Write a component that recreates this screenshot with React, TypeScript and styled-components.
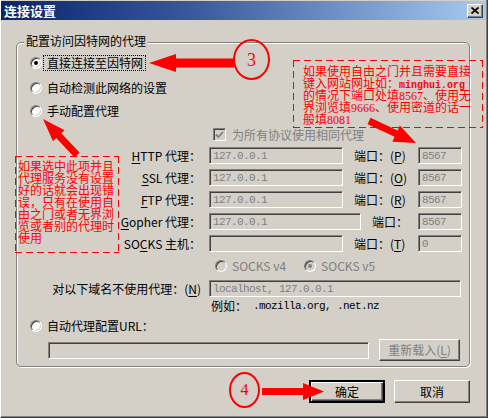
import React from "react";
import styled, { createGlobalStyle, css } from "styled-components";

const UI_FONT = `"Noto Sans CJK SC", "Liberation Sans", sans-serif`;
const MONO = `"Liberation Mono", "Noto Sans CJK SC", monospace`;
const NOTE_FONT = `"Liberation Serif", "Noto Sans CJK SC", serif`;

const Global = createGlobalStyle`
  html, body { margin: 0; padding: 0; background: #d4d0c8; }
  body { font-family: ${UI_FONT}; font-size: 12px; color: #000; }
  * { box-sizing: border-box; }
`;

const Window = styled.div`
  position: relative;
  width: 488px;
  height: 418px;
  padding-top: 1px;
  background: #d4d0c8;
  border-left: 1px solid #ffffff;
  border-right: 1px solid #404040;
  border-bottom: 1px solid #404040;
  box-shadow: inset -1px -1px 0 #808080;
  display: flex;
  flex-direction: column;
  overflow: hidden;
`;

const TitleBar = styled.div`
  height: 19px;
  margin-right: 1px;
  padding: 0 3px 0 3px;
  display: flex;
  align-items: center;
  justify-content: space-between;
  background: linear-gradient(90deg, #0a246a 0%, #3a5a9c 40%, #a6caf0 100%);
`;

const TitleText = styled.span`
  color: #fff;
  font-weight: bold;
  font-size: 13px;
  line-height: 15px;
  letter-spacing: 0;
`;

const CloseButton = styled.span`
  width: 16px;
  height: 14px;
  background: #d4d0c8;
  border: 1px solid;
  border-color: #ffffff #404040 #404040 #ffffff;
  box-shadow: inset -1px -1px 0 #808080;
  display: flex;
  align-items: center;
  justify-content: center;
`;

const Body = styled.div`
  flex: 1;
  display: flex;
  flex-direction: column;
  padding: 0 17px 0 15px;
`;

const GroupBox = styled.div`
  margin-top: 22px;
  height: 325px;
  border: 1px solid #808080;
  border-radius: 5px;
  box-shadow: 1px 1px 0 #ffffff, inset 1px 1px 0 #ffffff;
  display: flex;
  flex-direction: column;
  padding: 0 7px 0 0;
`;

const Legend = styled.div`
  align-self: flex-start;
  margin: -9px 0 0 7px;
  padding: 0 2px;
  background: #d4d0c8;
  line-height: 14px;
  white-space: nowrap;
`;

const Row = styled.div<{ $mt: number; $h: number; $pl?: number }>`
  display: flex;
  align-items: center;
  flex: none;
  margin-top: ${(p) => p.$mt}px;
  height: ${(p) => p.$h}px;
  padding-left: ${(p) => p.$pl ?? 0}px;
  white-space: nowrap;
`;

const Radio = styled.span<{ $checked?: boolean; $disabled?: boolean; $ml?: number }>`
  position: relative;
  flex: none;
  width: 12px;
  height: 12px;
  margin-left: ${(p) => p.$ml ?? 0}px;
  border-radius: 50%;
  background: ${(p) => (p.$disabled ? "#d4d0c8" : "#ffffff")};
  border: 1px solid;
  border-color: #808080 #ffffff #ffffff #808080;
  box-shadow: inset 1px 1px 0 #404040, inset -1px -1px 0 #d4d0c8;
  ${(p) =>
    p.$checked &&
    css`
      &::after {
        content: "";
        position: absolute;
        left: 3px;
        top: 3px;
        width: 4px;
        height: 4px;
        border-radius: 50%;
        background: ${p.$disabled ? "#808080" : "#000000"};
      }
    `}
`;

const RadioLabel = styled.span<{ $focus?: boolean; $disabled?: boolean }>`
  line-height: 14px;
  color: ${(p) => (p.$disabled ? "#808080" : "#000")};
  ${(p) =>
    p.$focus
      ? css`
          margin-left: 2px;
          padding: 0 2px 0 3px;
          outline: 1px dotted #000;
          outline-offset: 0;
        `
      : css`
          margin-left: 5px;
        `}
`;

const Checkbox = styled.span<{ $ml: number }>`
  flex: none;
  width: 13px;
  height: 13px;
  margin-left: ${(p) => p.$ml}px;
  background: #d4d0c8;
  border: 1px solid;
  border-color: #808080 #ffffff #ffffff #808080;
  box-shadow: inset 1px 1px 0 #404040, inset -1px -1px 0 #d4d0c8;
  display: flex;
  align-items: center;
  justify-content: center;
`;

const DimText = styled.span<{ $ml?: number }>`
  margin-left: ${(p) => p.$ml ?? 0}px;
  color: #808080;
  line-height: 14px;
`;

const FieldLabel = styled.span`
  flex: none;
  width: 192px;
  padding-right: 8px;
  text-align: right;
  line-height: 14px;
`;

const Accel = styled.u`
  text-decoration: underline;
  text-underline-offset: 2px;
`;

const Field = styled.div<{ $w: number; $h?: number; $ml?: number; $auto?: boolean }>`
  flex: none;
  width: ${(p) => p.$w}px;
  height: ${(p) => p.$h ?? 17}px;
  margin-left: ${(p) => (p.$auto ? "auto" : `${p.$ml ?? 0}px`)};
  padding-left: 3px;
  background: #d4d0c8;
  border: 1px solid;
  border-color: #808080 #ffffff #ffffff #808080;
  box-shadow: inset 1px 1px 0 #404040, inset -1px -1px 0 #d4d0c8;
  color: #808080;
  font-family: ${MONO};
  font-size: 11px;
  letter-spacing: -0.6px;
  display: flex;
  align-items: center;
  overflow: hidden;
`;

const PortLabel = styled.span`
  margin-left: 11px;
  line-height: 14px;
`;

const ExampleText = styled.span`
  margin-left: 194px;
  line-height: 14px;
`;

const ExampleDomains = styled.span`
  margin-left: 6px;
  font-family: ${MONO};
  font-size: 11px;
  letter-spacing: -0.6px;
`;

const Button = styled.button<{ $default?: boolean; $disabled?: boolean; $w: number; $h: number; $ml?: number }>`
  flex: none;
  width: ${(p) => p.$w}px;
  height: ${(p) => p.$h}px;
  margin: 0 0 0 ${(p) => p.$ml ?? 0}px;
  padding: 0;
  background: #d4d0c8;
  font-family: ${UI_FONT};
  font-size: 12px;
  line-height: 14px;
  color: ${(p) => (p.$disabled ? "#808080" : "#000")};
  border: 1px solid;
  border-color: #ffffff #404040 #404040 #ffffff;
  box-shadow: inset -1px -1px 0 #808080, inset 1px 1px 0 #d4d0c8;
  ${(p) =>
    p.$default &&
    css`
      outline: 1px solid #000;
      outline-offset: -1px;
      border: 2px solid;
      border-color: #000 #000 #000 #000;
      box-shadow: inset 1px 1px 0 #ffffff, inset -1px -1px 0 #404040, inset -2px -2px 0 #808080;
    `}
`;

const ButtonBar = styled.div`
  display: flex;
  justify-content: flex-end;
  margin-top: 13px;
  gap: 9px;
`;

/* ---------- annotations (overlays) ---------- */

const Note = styled.div<{ $x: number; $y: number; $w: number; $h: number; $pt: number; $pl: number }>`
  position: absolute;
  left: ${(p) => p.$x}px;
  top: ${(p) => p.$y}px;
  width: ${(p) => p.$w}px;
  height: ${(p) => p.$h}px;
  padding: ${(p) => p.$pt}px 0 0 ${(p) => p.$pl}px;
  color: #ff0000;
  font-family: ${NOTE_FONT};
  font-size: 12px;
  line-height: 12px;
  white-space: nowrap;
  background:
    repeating-linear-gradient(90deg, #f00 0 7px, transparent 7px 11px) top left / 100% 1px no-repeat,
    repeating-linear-gradient(90deg, #f00 0 7px, transparent 7px 11px) bottom left / 100% 1px no-repeat,
    repeating-linear-gradient(180deg, #f00 0 7px, transparent 7px 11px) top left / 1px 100% no-repeat,
    repeating-linear-gradient(180deg, #f00 0 7px, transparent 7px 11px) top right / 1px 100% no-repeat;
`;

const NoteLine = styled.div`
  height: 12px;
`;

const NoteMono = styled.span`
  font-family: ${MONO};
  font-size: 10px;
  font-weight: bold;
`;

const Marker = styled.div<{ $x: number; $y: number; $w: number; $h: number; $fs: number }>`
  position: absolute;
  left: ${(p) => p.$x}px;
  top: ${(p) => p.$y}px;
  width: ${(p) => p.$w}px;
  height: ${(p) => p.$h}px;
  border: 2.5px solid #ff0000;
  border-radius: 50%;
  display: flex;
  align-items: center;
  justify-content: center;
  color: #ff0000;
  font-family: "Liberation Serif", serif;
  font-size: ${(p) => p.$fs}px;
  line-height: 1;
`;

const ArrowLayer = styled.svg`
  position: absolute;
  left: 0;
  top: 0;
  pointer-events: none;
`;

function arrowPoints(tx: number, ty: number, hx: number, hy: number, sw: number, hl: number, hw: number) {
  const dx = hx - tx;
  const dy = hy - ty;
  const L = Math.hypot(dx, dy);
  const ux = dx / L;
  const uy = dy / L;
  const nx = -uy;
  const ny = ux;
  const bx = hx - ux * hl;
  const by = hy - uy * hl;
  const pts = [
    [tx + (nx * sw) / 2, ty + (ny * sw) / 2],
    [bx + (nx * sw) / 2, by + (ny * sw) / 2],
    [bx + (nx * hw) / 2, by + (ny * hw) / 2],
    [hx, hy],
    [bx - (nx * hw) / 2, by - (ny * hw) / 2],
    [bx - (nx * sw) / 2, by - (ny * sw) / 2],
    [tx - (nx * sw) / 2, ty - (ny * sw) / 2],
  ];
  return pts.map((p) => `${p[0].toFixed(1)},${p[1].toFixed(1)}`).join(" ");
}

const arrows = [
  arrowPoints(233, 63, 148, 63, 9, 27, 18),
  arrowPoints(76, 155, 42, 119, 7, 23, 16),
  arrowPoints(368, 121, 415, 143, 7, 22, 18),
  arrowPoints(261, 391.5, 323, 391.5, 7, 21, 17),
];

type ProxyDef = {
  key: string;
  pre: string;
  accel: string;
  post: string;
  width: number;
  value: string;
  port: string;
  portKey?: string;
};

const proxies: ProxyDef[] = [
  { key: "http", pre: "", accel: "H", post: "TTP 代理：", width: 134, value: "127.0.0.1", port: "8567", portKey: "P" },
  { key: "ssl", pre: "", accel: "S", post: "SL 代理：", width: 134, value: "127.0.0.1", port: "8567", portKey: "O" },
  { key: "ftp", pre: "", accel: "F", post: "TP 代理：", width: 134, value: "127.0.0.1", port: "8567", portKey: "R" },
  { key: "gopher", pre: "", accel: "G", post: "opher 代理：", width: 152, value: "127.0.0.1", port: "8567" },
  { key: "socks", pre: "SO", accel: "C", post: "KS 主机：", width: 134, value: "", port: "0", portKey: "T" },
];

export default function App() {
  return (
    <>
      <Global />
      <Window>
        <TitleBar>
          <TitleText>连接设置</TitleText>
          <CloseButton>
            <svg width="8" height="7" viewBox="0 0 8 7">
              <path d="M0.5 0.5 L7.5 6.5 M7.5 0.5 L0.5 6.5" stroke="#000" strokeWidth="1.7" />
            </svg>
          </CloseButton>
        </TitleBar>
        <Body>
          <GroupBox>
            <Legend>配置访问因特网的代理</Legend>
            <Row $mt={7} $h={16} $pl={13}>
              <Radio $checked />
              <RadioLabel $focus>直接连接至因特网</RadioLabel>
            </Row>
            <Row $mt={9} $h={16} $pl={13}>
              <Radio />
              <RadioLabel>自动检测此网络的设置</RadioLabel>
            </Row>
            <Row $mt={7} $h={16} $pl={13}>
              <Radio />
              <RadioLabel>手动配置代理</RadioLabel>
            </Row>
            <Row $mt={8} $h={15}>
              <Checkbox $ml={196}>
                <svg width="9" height="8" viewBox="0 0 9 8">
                  <path d="M1 3.5 L3.5 6 L8 1" stroke="#808080" strokeWidth="1.8" fill="none" />
                </svg>
              </Checkbox>
              <DimText $ml={6}>为所有协议使用相同代理</DimText>
            </Row>
            {proxies.map((p, i) => (
              <Row key={p.key} $mt={i === 0 ? 5 : 5} $h={17}>
                <FieldLabel>
                  {p.pre}
                  <Accel>{p.accel}</Accel>
                  {p.post}
                </FieldLabel>
                <Field $w={p.width}>{p.value}</Field>
                <PortLabel>
                  端口：
                  {p.portKey && (
                    <>
                      (<Accel>{p.portKey}</Accel>)
                    </>
                  )}
                </PortLabel>
                <Field $w={44} $auto>
                  {p.port}
                </Field>
              </Row>
            ))}
            <Row $mt={7} $h={14}>
              <Radio $ml={198} $disabled />
              <DimText $ml={5}>SOCKS v4</DimText>
              <Radio $ml={18} $disabled $checked />
              <DimText $ml={5}>SOCKS v5</DimText>
            </Row>
            <Row $mt={7} $h={17}>
              <FieldLabel>
                对以下域名不使用代理：(<Accel>N</Accel>)
              </FieldLabel>
              <Field $w={252}>localhost, 127.0.0.1</Field>
            </Row>
            <Row $mt={2} $h={14}>
              <ExampleText>例如：</ExampleText>
              <ExampleDomains>.mozilla.org, .net.nz</ExampleDomains>
            </Row>
            <Row $mt={5} $h={16} $pl={13}>
              <Radio />
              <RadioLabel>自动代理配置URL：</RadioLabel>
            </Row>
            <Row $mt={5} $h={22}>
              <Field $w={321} $ml={31} />
              <Button $w={81} $h={22} $ml={10} $disabled>
                重新载入(<Accel>L</Accel>)
              </Button>
            </Row>
          </GroupBox>
          <ButtonBar>
            <Button $w={76} $h={23} $default>
              确定
            </Button>
            <Button $w={76} $h={23}>
              取消
            </Button>
          </ButtonBar>
        </Body>

        <Note $x={14} $y={156} $w={104} $h={97} $pt={5} $pl={3}>
          <NoteLine>如果选中此项并且</NoteLine>
          <NoteLine>代理服务没有设置</NoteLine>
          <NoteLine>好的话就会出现错</NoteLine>
          <NoteLine>误，只有在使用自</NoteLine>
          <NoteLine>由之门或者无界浏</NoteLine>
          <NoteLine>览或者别的代理时</NoteLine>
          <NoteLine>使用</NoteLine>
        </Note>
        <Note $x={292} $y={60} $w={190} $h={68} $pt={6} $pl={10}>
          <NoteLine>如果使用自由之门并且需要直接</NoteLine>
          <NoteLine>
            键入网站网址如：<NoteMono>minghui.org</NoteMono>
          </NoteLine>
          <NoteLine>的情况下端口处填8567、使用无</NoteLine>
          <NoteLine>界浏览填9666、使用密道的话一</NoteLine>
          <NoteLine>般填8081</NoteLine>
        </Note>

        <Marker $x={232} $y={39} $w={37} $h={41} $fs={18}>
          3
        </Marker>
        <Marker $x={228} $y={372} $w={31} $h={36} $fs={16}>
          4
        </Marker>

        <ArrowLayer width={488} height={418} viewBox="0 0 488 418">
          {arrows.map((pts, i) => (
            <polygon key={i} points={pts} fill="#ff0000" />
          ))}
        </ArrowLayer>
      </Window>
    </>
  );
}
